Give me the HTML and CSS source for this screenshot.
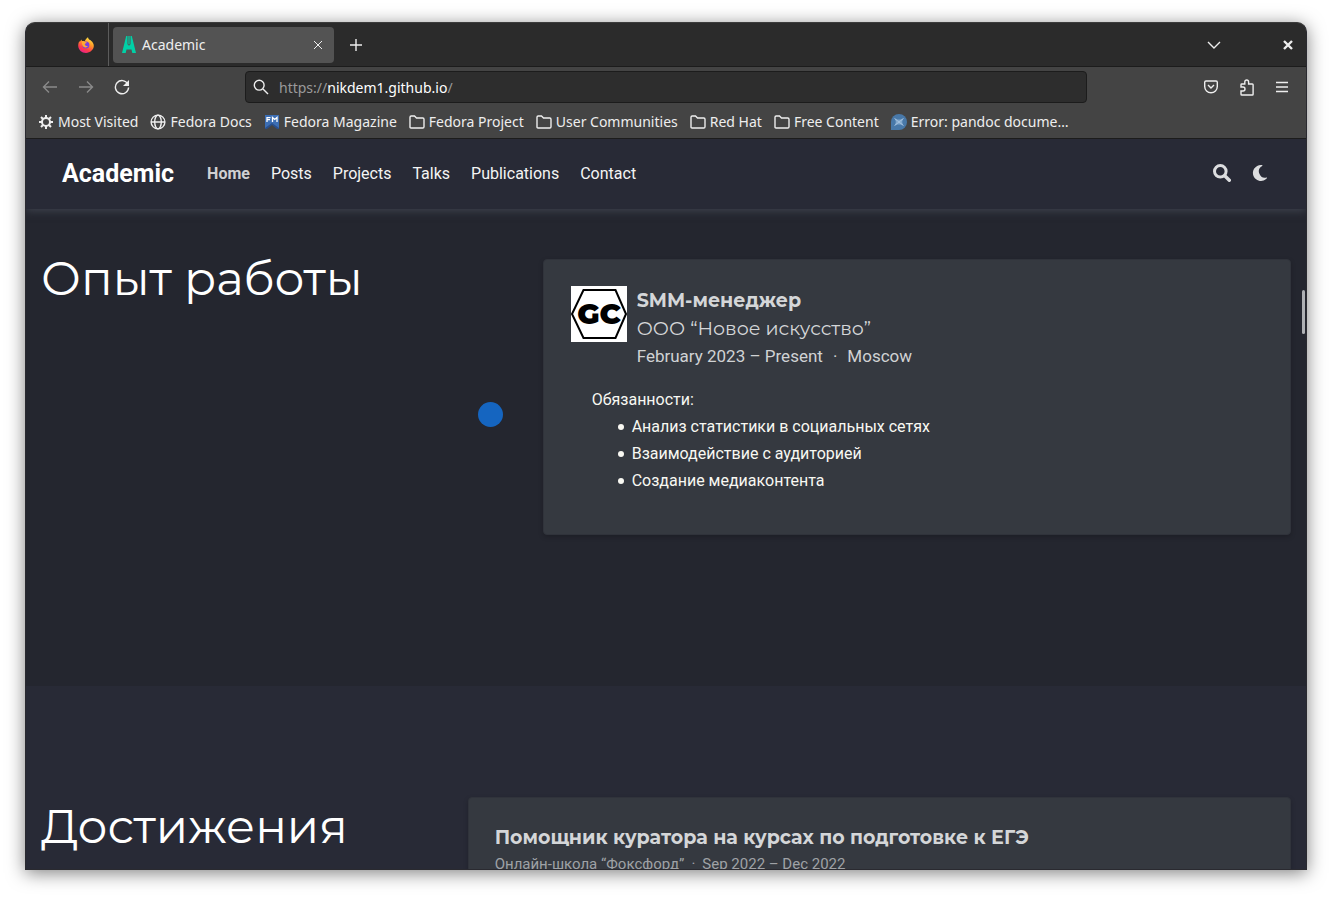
FILE: index.html
```html
<!DOCTYPE html>
<html lang="ru">
<head>
<meta charset="utf-8">
<title>Academic</title>
<link rel="stylesheet" href="styles.css">
</head>
<body>
<div class="window">
  <header class="titlebar">
    <div class="pinned">
      <svg width="16" height="16" viewBox="0 0 16 16" aria-hidden="true">
        <defs>
          <linearGradient id="fx" x1=".8" y1="0" x2=".3" y2="1"><stop offset="0" stop-color="#fff04a"/><stop offset=".4" stop-color="#ff9a28"/><stop offset=".75" stop-color="#ff3b4a"/><stop offset="1" stop-color="#e9218c"/></linearGradient>
        </defs>
        <path fill="url(#fx)" d="M10 .2c.3 1.500.9 2.200 1.900 2.800.5-.1.900.2 1.100.7 1.800 1.300 2.900 3.300 2.800 5.400-.2 3.900-3.600 6.800-7.800 6.800S.3 12.800.2 8.700c0-1.800.4-3.300 1.300-4.700l.3 1c.3-.9 1-1.900 1.900-2.500l.1 1.600c1-.3 2-.2 3 .2C7.400 2.400 8.600 1.100 10 .2z"/>
        <circle cx="7.900" cy="8" r="3.500" fill="#7a3fe0"/>
        <path fill="#ffab30" d="M3.800 4.600c1.300-.6 2.500-.1 3.200.3.700.3 1.300.3 1.800.3-.2 1.200-1.800 1.100-2 2 .1 1.400 1.600 2.200 3 1.700-1 1.900-3.800 2-5 .2-.8-1.300-1-3-.9-4.500z"/>
      </svg>
    </div>
    <div class="tab">
      <svg width="14" height="17" viewBox="0 0 14 17" aria-hidden="true"><path fill="#00d1a7" d="M4.200 0h1.300v8.200L7 9.800l1.500-1.600V0h1.300L14 17h-3.700l-.8-3.500h-5L3.700 17H0zM6.400 0h1.200v8L7 8.600 6.400 8z"/></svg>
      <span class="tab-title">Academic</span>
      <button class="icon-button" aria-label="Close tab"><svg width="10" height="10" viewBox="0 0 10 10"><path class="line" d="M1 1l8 8M9 1L1 9"/></svg></button>
    </div>
    <button class="icon-button new-tab" aria-label="New tab"><svg width="12" height="12" viewBox="0 0 12 12"><path class="line wide" d="M6 0v12M0 6h12"/></svg></button>
    <div class="window-actions">
      <button class="icon-button" aria-label="List tabs"><svg width="14" height="8" viewBox="0 0 14 8"><path class="line wide" d="M1 1l6 6 6-6"/></svg></button>
      <button class="icon-button" aria-label="Close window"><svg width="10" height="10" viewBox="0 0 10 10"><path class="line thick" d="M1 1l8 8M9 1L1 9"/></svg></button>
    </div>
  </header>

  <div class="toolbar">
    <div class="history">
      <button class="icon-button dim" aria-label="Back"><svg width="16" height="14" viewBox="0 0 16 14"><path class="line wide" d="M15 7H1.500M7 1.500L1.500 7 7 12.500"/></svg></button>
      <button class="icon-button dim" aria-label="Forward"><svg width="16" height="14" viewBox="0 0 16 14"><path class="line wide" d="M1 7h13.500M9 1.500L14.500 7 9 12.500"/></svg></button>
      <button class="icon-button" aria-label="Reload"><svg width="16" height="16" viewBox="0 0 16 16"><path class="line wide" d="M13.800 5A6.600 6.600 0 1 0 14.600 8.500"/><path fill="currentColor" d="M15 1v6H9z"/></svg></button>
    </div>
    <form class="address">
      <svg width="16" height="16" viewBox="0 0 16 16" aria-hidden="true"><circle class="line wide" cx="6.200" cy="6.200" r="4.900"/><path class="line wide" d="M10 10l5 5"/></svg>
      <div class="url" role="textbox" aria-label="Address" contenteditable="true" spellcheck="false">https://<b>nikdem1.github.io</b>/</div>
    </form>
    <div class="extras">
      <button class="icon-button" aria-label="Save to Pocket"><svg width="14" height="14" viewBox="0 0 14 14"><path class="line wide" d="M2 1h10q1.300 0 1.300 1.300V6.500a6.300 6.300 0 0 1-12.600 0V2.300Q.7 1 2 1zM4 5l3 3 3-3"/></svg></button>
      <button class="icon-button" aria-label="Extensions"><svg width="14" height="17" viewBox="0 0 14 17"><path class="line wide" d="M1 8V5.700Q1 5 1.700 5H4.800V3a1.900 2 0 0 1 3.800 0v2h3.700q.8 0 .8.800v9.400q0 .8-.8.800H1.800Q1 16 1 15.200V12h2a2 2 0 0 0 0-4z"/></svg></button>
      <button class="icon-button" aria-label="Menu"><svg width="12" height="12" viewBox="0 0 12 12"><path class="line wide" d="M0 1.500h12M0 6h12M0 10.500h12"/></svg></button>
    </div>
  </div>

  <nav class="bookmarks" aria-label="Bookmarks">
    <a href="#"><svg width="16" height="16" viewBox="0 0 16 16"><circle cx="8" cy="8" r="4" fill="none" stroke="currentColor" stroke-width="2"/><path stroke="currentColor" stroke-width="2" d="M8 1v3M8 12v3M1 8h3M12 8h3M3 3l2 2M11 11l2 2M13 3l-2 2M5 11l-2 2"/></svg>Most Visited</a>
    <a href="#"><svg width="16" height="16" viewBox="0 0 16 16"><circle class="line wide" cx="8" cy="8" r="6.900"/><ellipse class="line wide" cx="8" cy="8" rx="3.300" ry="6.900"/><path class="line wide" d="M1 8h14"/></svg>Fedora Docs</a>
    <a href="#"><svg width="16" height="16" viewBox="0 0 16 16"><path fill="#294f8c" d="M1 1h14v14l-2 0-5-4-5 4H1z"/><path fill="#3c6eb4" d="M1 1h14v13l-7-5-7 5z"/><path fill="none" stroke="#fff" stroke-width="1.300" d="M3 8V3.600H6.500M3 5.600H6M8.500 8V3.500l2.200 2 2.300-2V8"/></svg>Fedora Magazine</a>
    <a href="#"><svg width="16" height="16" viewBox="0 0 16 16"><path class="line wide" d="M1 13V3.300Q1 2 2.200 2H5.500L7.500 4h6.300Q15 4 15 5.200V12.800Q15 14 13.800 14H2Q1 14 1 13z"/></svg>Fedora Project</a>
    <a href="#"><svg width="16" height="16" viewBox="0 0 16 16"><path class="line wide" d="M1 13V3.300Q1 2 2.200 2H5.500L7.500 4h6.300Q15 4 15 5.200V12.800Q15 14 13.800 14H2Q1 14 1 13z"/></svg>User Communities</a>
    <a href="#"><svg width="16" height="16" viewBox="0 0 16 16"><path class="line wide" d="M1 13V3.300Q1 2 2.200 2H5.500L7.500 4h6.300Q15 4 15 5.200V12.800Q15 14 13.800 14H2Q1 14 1 13z"/></svg>Red Hat</a>
    <a href="#"><svg width="16" height="16" viewBox="0 0 16 16"><path class="line wide" d="M1 13V3.300Q1 2 2.200 2H5.500L7.500 4h6.300Q15 4 15 5.200V12.800Q15 14 13.800 14H2Q1 14 1 13z"/></svg>Free Content</a>
    <a href="#"><svg width="16" height="16" viewBox="0 0 16 16"><path fill="#4878a8" d="M8 0a8 8 0 1 1 0 16H0V8a8 8 0 0 1 8-8z"/><path fill="#7fa6cc" d="M4 4.500l2.500 1h3l2.500-1-.8 3.500.8 3.500-2.500-1h-3l-2.500 1L4.800 8z"/><path stroke="#a5c2de" d="M3.500 4.500l9 7M12.500 4.500l-9 7"/></svg>Error: pandoc docume…</a>
  </nav>

  <main class="page">
    <nav class="site-nav">
      <a class="brand" href="#">Academic</a>
      <ul class="links">
        <li><a class="active" href="#">Home</a></li>
        <li><a href="#">Posts</a></li>
        <li><a href="#">Projects</a></li>
        <li><a href="#">Talks</a></li>
        <li><a href="#">Publications</a></li>
        <li><a href="#">Contact</a></li>
      </ul>
      <button class="icon-button" aria-label="Search"><svg width="18" height="18" viewBox="0 0 18 18"><circle cx="7.300" cy="7.300" r="5.800" fill="none" stroke="currentColor" stroke-width="3"/><path stroke="currentColor" stroke-width="3.400" stroke-linecap="round" d="M12 12l4.300 4.300"/></svg></button>
      <button class="icon-button" aria-label="Dark mode"><svg width="16" height="16" viewBox="0 0 16 16"><path fill="currentColor" d="M9 0a8 8 0 1 0 5.900 13.300c.3-.4 0-.8-.4-.7A6.300 6.300 0 0 1 10.200.9C10.600.7 10.500.2 10 .1z"/></svg></button>
    </nav>

    <section class="section experience">
      <h1>Опыт работы</h1>
      <div class="timeline">
        <span class="dot"></span>
        <article class="card job">
          <div class="job-head">
            <svg class="logo" width="56" height="56" viewBox="0 0 56 56" role="img" aria-label="GC"><path fill="#fff" d="M0 0h56v56H0z"/><path fill="none" stroke="#000" stroke-width="2" d="M12.500 4h32L55 28 44.500 52h-32L1 28z"/><text class="logo-text" x="28" y="38" text-anchor="middle">GC</text></svg>
            <div class="job-text">
              <h2>SMM-менеджер</h2>
              <h3>ООО “Новое искусство”</h3>
              <p class="meta"><span>February 2023 – Present</span><span>·</span><span>Moscow</span></p>
            </div>
          </div>
          <div class="duties">
            <p>Обязанности:</p>
            <ul>
              <li>Анализ статистики в социальных сетях</li>
              <li>Взаимодействие с аудиторией</li>
              <li>Создание медиаконтента</li>
            </ul>
          </div>
        </article>
      </div>
    </section>

    <section class="section achievements">
      <h1>Достижения</h1>
      <article class="card award">
        <h2>Помощник куратора на курсах по подготовке к ЕГЭ</h2>
        <p class="award-meta"><span>Онлайн-школа “Фоксфорд”</span><span>·</span><span>Sep 2022 – Dec 2022</span></p>
      </article>
    </section>
    <span class="scroll-thumb"></span>
  </main>
</div>
</body>
</html>
```
FILE: styles.css
```css
* { box-sizing: border-box; }
h1, h2, h3, p, ul { margin: 0; padding: 0; }
a { color: inherit; text-decoration: none; }

body {
  margin: 0;
  height: 100vh;
  padding: 22px 25px 28px;
  background: #fff;
  font-family: Roboto, "Noto Sans", sans-serif;
  font-size: 16px;
  color: #f8f8f2;
}

.window {
  height: 100%;
  display: flex;
  flex-direction: column;
  overflow: hidden;
  border: 1px solid #2a2a30;
  border-top-color: #3c3c3c;
  border-radius: 10px 10px 0 0;
  background: #444;
  box-shadow: 0 3px 18px rgba(0, 0, 0, .5);
}

.titlebar, .toolbar, .bookmarks {
  flex: none;
  font-family: "Noto Sans", sans-serif;
  font-size: 14px;
  color: #eee;
}

.line { fill: none; stroke: currentColor; stroke-width: 1; }
.wide { stroke-width: 1.4; }
.thick { stroke-width: 2.4; }

.icon-button {
  display: flex;
  align-items: center;
  justify-content: center;
  padding: 0;
  border: 0;
  background: none;
  color: inherit;
}
.dim { color: #8a8a8a; }

.titlebar {
  display: flex;
  align-items: center;
  height: 44px;
  background: #2b2b2b;
  border-bottom: 1px solid #1c1c1c;
}
.pinned {
  display: flex;
  align-items: center;
  justify-content: flex-end;
  width: 83px;
  height: 100%;
  padding-right: 14px;
  border-right: 1px solid #5c5c5c;
}
.tab {
  display: flex;
  align-items: center;
  gap: 6px;
  width: 221px;
  height: 36px;
  margin-left: 4px;
  padding: 0 11px 0 9px;
  border-radius: 4px;
  background: #535353;
}
.tab-title { flex: 1; }
.new-tab { margin-left: 16px; }
.window-actions {
  display: flex;
  gap: 62px;
  margin-left: auto;
  padding-right: 13px;
}

.toolbar {
  display: grid;
  grid-template-columns: 219px 1fr 219px;
  align-items: center;
  height: 40px;
}
.history { display: flex; gap: 20px; padding-left: 16px; }
.address {
  display: flex;
  align-items: center;
  gap: 10px;
  height: 32px;
  padding: 0 7px;
  border: 1px solid #1c1c1c;
  border-radius: 4px;
  background: #2d2d2d;
}
.url { flex: 1; color: #9a9a9a; outline: 0; }
.url b { font-weight: 400; color: #fff; }
.extras {
  display: flex;
  align-items: center;
  justify-content: flex-end;
  gap: 22px;
  padding-right: 18px;
}

.bookmarks {
  display: flex;
  align-items: center;
  gap: 12px;
  height: 32px;
  padding: 0 12px 2px;
  border-bottom: 1px solid #1c1c1c;
  white-space: nowrap;
}
.bookmarks a { display: flex; align-items: center; gap: 4px; }

.page {
  position: relative;
  flex: 1;
  min-height: 0;
  overflow: hidden;
  background: #282a36;
}
.site-nav {
  position: relative;
  display: flex;
  align-items: center;
  height: 70px;
  padding: 0 38px 2px 36px;
  background: #282a36;
  box-shadow: 0 2px 8px #3e424d;
  color: #dcdddf;
}
.brand { margin-right: 33px; font-size: 25px; font-weight: 700; color: #fff; }
.links { flex: 1; display: flex; gap: 21px; list-style: none; color: #f4f4f4; }
.links .active { font-weight: 700; color: #d0d0d2; }
.site-nav .icon-button + .icon-button { margin-left: 21px; }

.section {
  display: grid;
  grid-template-columns: 1fr 2fr;
}
.section h1 {
  padding-left: 15px;
  font-family: Montserrat, "Open Sans", sans-serif;
  font-size: 47px;
  font-weight: 400;
  line-height: 58px;
  color: #fff;
}
.experience { padding-top: 41px; padding-bottom: 151px; background: #24262f; }
.timeline {
  display: grid;
  grid-template-columns: 65px 1fr;
  align-items: center;
  margin: 9px 15px 0 25px;
}
.dot { width: 25px; height: 25px; margin-top: 34px; border-radius: 50%; background: #1565c0; }
.card {
  border: 1px solid #30333b;
  border-radius: 4px;
  background: #353940;
  box-shadow: 0 2px 5px rgba(0, 0, 0, .2);
}
.card h2, .card h3 {
  font-family: Montserrat, "Open Sans", sans-serif;
  font-size: 19px;
  line-height: 28px;
  color: #d4d6d8;
}
.card h3 { font-weight: 400; }
.job { padding: 26px 27px 40px; }
.job-head { display: flex; gap: 10px; }
.job-text { padding-top: 1px; }
.logo { flex: none; }
.logo-text { font-family: Montserrat, "Open Sans", sans-serif; font-size: 29px; font-weight: 900; }
.meta { display: flex; gap: 10px; font-size: 17px; line-height: 27px; color: #d0d2d4; }
.duties { padding: 16px 21px 0; line-height: 27px; }
.duties ul { padding-left: 26px; list-style: none; }
.duties li { display: flex; align-items: center; gap: 8px; }
.duties li::before {
  content: "";
  width: 6px;
  height: 6px;
  border-radius: 50%;
  background: currentColor;
}

.achievements { padding-top: 111px; }
.achievements h1 { padding-top: 1px; }
.award { height: 160px; margin: 0 15px; padding: 26px; }
.award-meta { display: flex; gap: 7px; font-size: 15px; line-height: 24px; color: #9fa2a6; }

.scroll-thumb {
  position: absolute;
  top: 151px;
  right: 1px;
  width: 3px;
  height: 44px;
  border-radius: 2px;
  background: #aeb0b4;
}
```
